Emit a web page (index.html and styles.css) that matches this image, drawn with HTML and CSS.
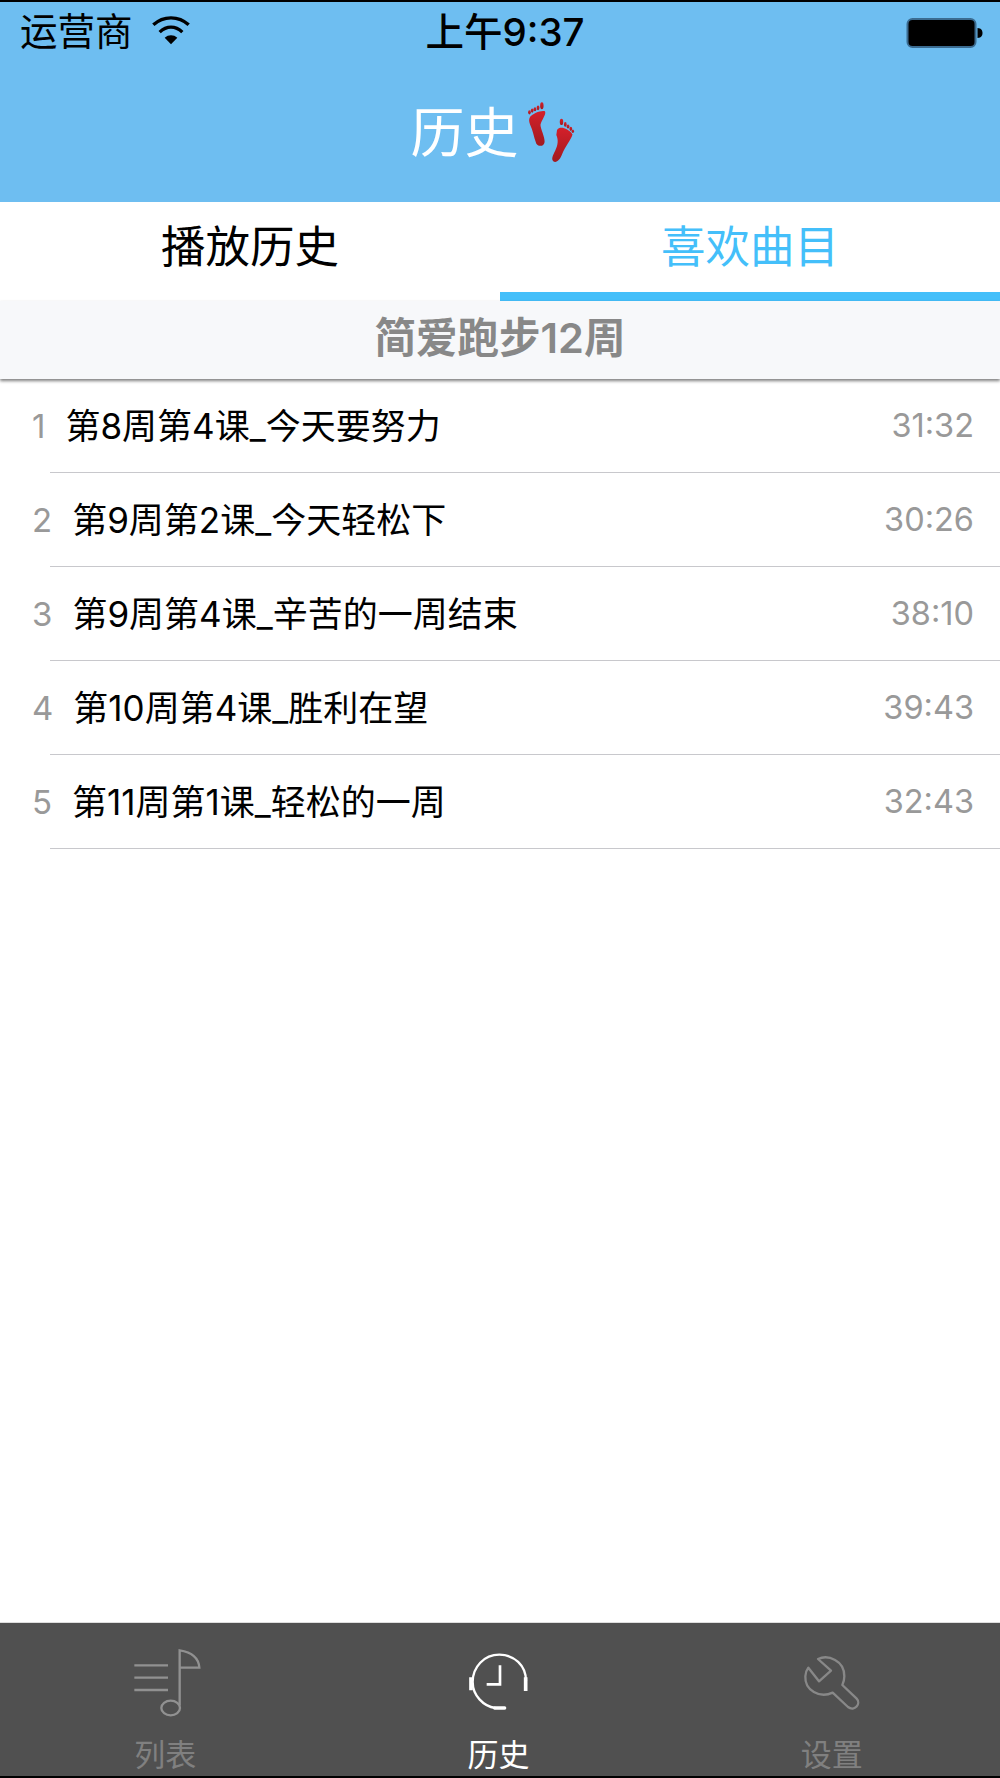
FILE: index.html
```html
<!DOCTYPE html>
<html lang="zh-CN">
<head>
<meta charset="utf-8">
<title>历史</title>
<link rel="stylesheet" href="styles.css">
</head>
<body>
<div class="app">
  <header class="top">
    <div class="status">
      <div class="status-left">
        <span class="carrier">运营商</span>
        <svg class="wifi" viewBox="55 45 126 98"><path d="M65 80 C95 52 141 52 171 80" fill="none" stroke="#000" stroke-width="10"/><path d="M84 102 C105 82 131 82 152 102" fill="none" stroke="#000" stroke-width="10"/><path d="M99 119 C110 109 126 109 137 119 L118 138Z" fill="#000"/></svg>
      </div>
      <span class="time">上午9:37</span>
      <div class="status-right">
        <svg class="battery" viewBox="0 0 76 30"><rect x="1" y="1" width="68" height="28" rx="5" fill="#000" stroke="#3b6b90" stroke-width="2"/><path d="M71 10 C75 10 76 13 76 15 C76 17 75 20 71 20Z" fill="#000"/></svg>
      </div>
    </div>
    <div class="nav">
      <span class="nav-title">历史</span>
      <svg class="feet" viewBox="50 40 148 178">
        <defs><linearGradient id="red" x1="0" y1="0" x2="0" y2="1"><stop offset="0" stop-color="#d4202a"/><stop offset="1" stop-color="#a11a20"/></linearGradient></defs>
        <g fill="url(#red)">
          <ellipse cx="60" cy="69" rx="4" ry="6"/><ellipse cx="68" cy="64" rx="4" ry="6"/><ellipse cx="76" cy="60" rx="4" ry="6"/><ellipse cx="85" cy="56" rx="4" ry="7"/><ellipse cx="96" cy="50" rx="5" ry="10"/>
          <path d="M62 82 C70 72 95 62 105 66 C110 74 95 92 92 105 C92 118 105 140 104 155 C102 168 88 170 80 160 C72 140 70 120 62 105 C58 95 58 88 62 82Z"/>
          <ellipse cx="153" cy="97" rx="5" ry="9"/><ellipse cx="164" cy="104" rx="4" ry="7"/><ellipse cx="172" cy="110" rx="4" ry="6"/><ellipse cx="180" cy="117" rx="4" ry="6"/><ellipse cx="186" cy="124" rx="3.5" ry="5"/>
          <path d="M140 120 C148 108 172 115 185 133 C180 150 165 165 155 190 C150 205 140 216 130 212 C122 205 128 195 135 180 C142 165 145 150 138 135Z"/>
        </g>
      </svg>
    </div>
  </header>

  <nav class="tabs">
    <div class="tab">播放历史</div>
    <div class="tab tab-active">喜欢曲目</div>
  </nav>

  <div class="section">简爱跑步12周</div>

  <main class="list">
    <div class="row"><span class="num">1</span><span class="name">第8周第4课_今天要努力</span><span class="dur">31:32</span></div>
    <div class="row"><span class="num">2</span><span class="name">第9周第2课_今天轻松下</span><span class="dur">30:26</span></div>
    <div class="row"><span class="num">3</span><span class="name">第9周第4课_辛苦的一周结束</span><span class="dur">38:10</span></div>
    <div class="row"><span class="num">4</span><span class="name">第10周第4课_胜利在望</span><span class="dur">39:43</span></div>
    <div class="row"><span class="num">5</span><span class="name">第11周第1课_轻松的一周</span><span class="dur">32:43</span></div>
  </main>

  <footer class="tabbar">
    <div class="bar-item">
      <svg class="bar-icon" viewBox="110 110 240 216" fill="none" stroke="#919191" stroke-width="7">
        <path d="M132 165 H233 M132 202 H233 M132 239 H233"/>
        <path d="M268 285 V120 C300 125 325 140 327 172 H270"/>
        <ellipse cx="241" cy="293" rx="28" ry="22"/>
      </svg>
      <span class="bar-label">列表</span>
    </div>
    <div class="bar-item bar-item-active">
      <svg class="bar-icon" viewBox="120 110 240 216" fill="none" stroke="#fff" stroke-width="7">
        <path d="M318 212 C318 165 282 133 238 133 C192 133 158 170 158 215 C158 255 190 288 226 293"/>
        <path d="M240 165 V222 H200" stroke-width="8"/>
        <path d="M153 201 V240 M317 201 V242" stroke-width="11"/>
        <path d="M224 293 H254" stroke-width="10" stroke-linecap="round"/>
      </svg>
      <span class="bar-label">历史</span>
    </div>
    <div class="bar-item">
      <svg class="bar-icon" viewBox="100 110 240 216" fill="none" stroke="#888" stroke-width="7" stroke-linejoin="round">
        <path d="M146 172 L178 213 L214 181 L175 146 C205 132 255 150 254 198 C254 208 252 216 248 224 L291 265 C305 280 285 305 265 290 L219 247 C180 265 135 240 137 198 C137 188 140 180 146 172Z"/>
      </svg>
      <span class="bar-label">设置</span>
    </div>
  </footer>
</div>
</body>
</html>
```

FILE: styles.css
```css
* { box-sizing: border-box; }
html, body { margin: 0; padding: 0; }
body {
  background: #fff;
  font-family: Inter, "Noto Sans CJK SC", sans-serif;
  color: #000;
}
.app {
  width: 1000px;
  height: 1778px;
  display: flex;
  flex-direction: column;
  overflow: hidden;
}
.top {
  height: 202px;
  flex: none;
  background: #6ebef1;
  border-top: 2px solid #000;
}
.status {
  height: 62px;
  display: grid;
  grid-template-columns: 1fr auto 1fr;
  align-items: center;
  padding: 0 17px 2px 20px;
}
.status-left { display: flex; align-items: center; }
.carrier { font-size: 37.5px; line-height: 1; }
.wifi { width: 42px; height: 33px; margin-left: 17px; margin-top: -6px; }
.time { font-size: 38.5px; line-height: 1; font-weight: 500; margin-left: 7px; }
.status-right { display: flex; justify-content: flex-end; }
.battery { width: 77px; height: 30px; margin-top: 1px; }
.nav {
  height: 136px;
  display: flex;
  align-items: center;
  justify-content: center;
  padding: 4px 13px 0 0;
}
.nav-title { font-size: 54px; line-height: 1; color: #fff; }
.feet { width: 51px; height: 62px; margin-left: 7px; margin-top: -2px; }
.tabs { height: 99px; flex: none; display: flex; }
.tab {
  flex: 1;
  display: flex;
  align-items: center;
  justify-content: center;
  font-size: 44.5px;
  line-height: 1;
  border-bottom: 9px solid transparent;
}
.tab-active { color: #44bffa; border-bottom-color: #44bffa; }
.section {
  height: 78px;
  flex: none;
  background: #f7f8fa;
  color: #888;
  font-size: 41.5px;
  font-weight: 600;
  line-height: 74px;
  text-align: center;
  box-shadow: 0 2px 3px rgba(0, 0, 0, 0.5);
  position: relative;
}
.list { flex: 1; }
.row {
  height: 94px;
  display: flex;
  align-items: center;
  padding: 0 26px 0 32px;
  position: relative;
}
.row::after {
  content: "";
  position: absolute;
  left: 50px;
  right: 0;
  bottom: 0;
  height: 1px;
  background: #c8c8cc;
}
.num { font-size: 33px; line-height: 1; color: #999; margin-right: 20px; }
.name { flex: 1; font-size: 35px; line-height: 1; color: #000; }
.dur { font-size: 32.5px; line-height: 1; color: #999; }
.tabbar {
  height: 156px;
  flex: none;
  background: #505050;
  border-top: 1px solid #ddd;
  border-bottom: 2px solid #000;
  display: flex;
}
.bar-item {
  flex: 1;
  display: flex;
  flex-direction: column;
  align-items: center;
  padding-top: 24px;
  color: #808080;
}
.bar-item-active { color: #fff; }
.bar-icon { width: 80px; height: 72px; }
.bar-label { font-size: 31px; line-height: 1; margin-top: 20px; padding-right: 3px; }
```
